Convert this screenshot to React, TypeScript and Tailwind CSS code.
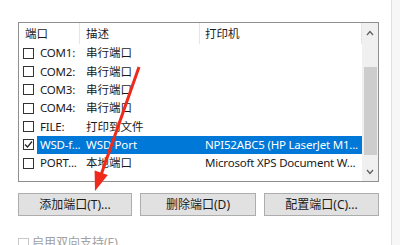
const rows = [
  { port: "COM1:", desc: "串行端口", printer: "", checked: false },
  { port: "COM2:", desc: "串行端口", printer: "", checked: false },
  { port: "COM3:", desc: "串行端口", printer: "", checked: false },
  { port: "COM4:", desc: "串行端口", printer: "", checked: false },
  { port: "FILE:", desc: "打印到文件", printer: "", checked: false },
  { port: "WSD-f...", desc: "WSD Port", printer: "NPI52ABC5 (HP LaserJet M1...", checked: true },
  { port: "PORT...", desc: "本地端口", printer: "Microsoft XPS Document W...", checked: false },
];

const Check = ({ checked, dim }: { checked?: boolean; dim?: boolean }) => (
  <div
    className={`w-[11px] h-[11px] border bg-white flex items-center justify-center shrink-0 ${
      dim ? "border-[#c8c8c8]" : "border-[#333333]"
    }`}
  >
    {checked && (
      <svg width="9" height="9" viewBox="0 0 9 9">
        <path d="M1 4.5 L3.5 7 L8 1.5" fill="none" stroke="#222" strokeWidth="1.2" />
      </svg>
    )}
  </div>
);

const App = () => {
  return (
    <div
      className="w-[400px] h-[245px] bg-white flex overflow-hidden relative text-[12px] text-[#1a1a1a]"
      style={{ fontFamily: '"Noto Sans", "Noto Sans CJK SC", sans-serif' }}
    >
      <div className="w-[391px] pl-[18px] pt-[22px]">
        {/* list */}
        <div className="w-[361px] h-[160px] border border-[#8f8f8f] flex text-[11.5px]">
          <div className="w-[343px] flex flex-col">
            <div className="h-[21px] flex items-center leading-none">
              <div className="w-[61px] h-full pl-[6px] flex items-center border-r border-[#e5e5e5]">端口</div>
              <div className="w-[120px] h-full pl-[6px] flex items-center border-r border-[#e5e5e5]">描述</div>
              <div className="flex-1 h-full pl-[5px] flex items-center border-r border-[#e5e5e5]">打印机</div>
            </div>
            {rows.map((r) => (
              <div key={r.port} className="h-[18.33px] flex items-center leading-none">
                <div className="w-[18px] pl-[4px] flex items-center">
                  <Check checked={r.checked} />
                </div>
                <div
                  className={`flex-1 h-full flex items-center ${
                    r.checked ? "bg-[#0078d7] text-white" : ""
                  }`}
                >
                  <div className="w-[44px] pl-[3px] whitespace-nowrap tracking-[-0.2px]">{r.port}</div>
                  <div className="w-[119px] pl-[5px] whitespace-nowrap">{r.desc}</div>
                  <div className="flex-1 pl-[5px] whitespace-nowrap tracking-[-0.2px]">{r.printer}</div>
                </div>
              </div>
            ))}
          </div>
          {/* scrollbar */}
          <div className="w-[16px] bg-[#f0f0f0] flex flex-col items-center">
            <div className="h-[20px] flex items-center justify-center">
              <svg width="8" height="6" viewBox="0 0 8 6">
                <path d="M1 5 L4 1.5 L7 5" fill="none" stroke="#606060" strokeWidth="1.3" />
              </svg>
            </div>
            <div className="mt-[24px] w-[13px] h-[88px] bg-[#cdcdcd]" />
            <div className="flex-1" />
            <div className="h-[18px] flex items-center justify-center">
              <svg width="8" height="6" viewBox="0 0 8 6">
                <path d="M1 1 L4 4.5 L7 1" fill="none" stroke="#606060" strokeWidth="1.3" />
              </svg>
            </div>
          </div>
        </div>

        {/* buttons */}
        <div className="w-[361px] mt-[11px] flex justify-between">
          <div className="w-[114px] h-[23px] bg-[#e1e1e1] border border-[#adadad] flex items-center justify-center">
            添加端口(T)...
          </div>
          <div className="w-[116px] h-[23px] bg-[#e1e1e1] border border-[#adadad] flex items-center justify-center">
            删除端口(D)
          </div>
          <div className="w-[115px] h-[23px] bg-[#e1e1e1] border border-[#adadad] flex items-center justify-center">
            配置端口(C)...
          </div>
        </div>

        {/* bidirectional */}
        <div className="mt-[21px] flex items-center gap-[3px] text-[#a0a0a0] leading-none">
          <Check dim />
          <span>启用双向支持(E)</span>
        </div>
      </div>
      <div className="flex-1 border-l border-[#e0e0e0] bg-[#f7f7f7]" />

      {/* red annotation arrow */}
      <svg className="absolute left-0 top-0 pointer-events-none" width="400" height="245">
        <line x1="139" y1="67" x2="101" y2="175" stroke="#ee2a1c" strokeWidth="3" />
        <polygon points="95,191 94.6,170.4 107.8,175" fill="#ee2a1c" />
      </svg>
    </div>
  );
};

export default App;
